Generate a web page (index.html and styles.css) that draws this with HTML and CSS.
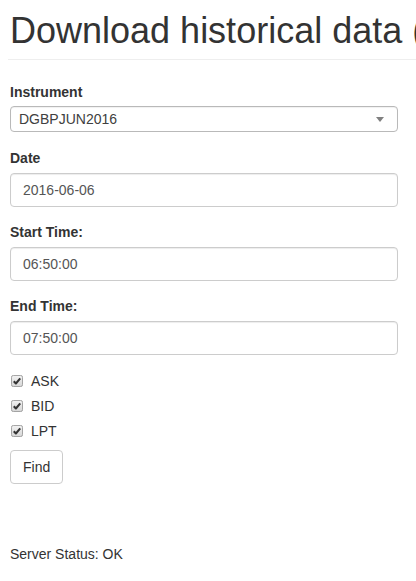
FILE: index.html
```html
<!DOCTYPE html>
<html>
<head>
<meta charset="utf-8">
<link rel="stylesheet" href="styles.css">
</head>
<body>
<div class="page">
  <h1 class="title">Download historical data (</h1>
  <hr class="rule">
  <form class="form">
    <div class="group group-select">
      <label class="lbl lbl-select">Instrument</label>
      <div class="select"><span class="select-text">DGBPJUN2016</span><span class="caret"></span></div>
    </div>
    <div class="group">
      <label class="lbl">Date</label>
      <div class="input">2016-06-06</div>
    </div>
    <div class="group">
      <label class="lbl">Start Time:</label>
      <div class="input">06:50:00</div>
    </div>
    <div class="group">
      <label class="lbl">End Time:</label>
      <div class="input">07:50:00</div>
    </div>
    <div class="checks">
      <div class="check"><svg class="cb" viewBox="0 0 13 13" width="13" height="13"><defs><linearGradient id="g" x1="0" y1="0" x2="0" y2="1"><stop offset="0" stop-color="#f2f2f2"/><stop offset="1" stop-color="#d6d6d6"/></linearGradient></defs><rect x="0.5" y="0.5" width="12" height="12" rx="2" fill="url(#g)" stroke="#9a9a9a"/><path d="M3 6.8 L5.3 9.2 L10 3.6" fill="none" stroke="#333" stroke-width="2.2" stroke-linejoin="round"/></svg><span>ASK</span></div>
      <div class="check"><svg class="cb" viewBox="0 0 13 13" width="13" height="13"><rect x="0.5" y="0.5" width="12" height="12" rx="2" fill="url(#g)" stroke="#9a9a9a"/><path d="M3 6.8 L5.3 9.2 L10 3.6" fill="none" stroke="#333" stroke-width="2.2" stroke-linejoin="round"/></svg><span>BID</span></div>
      <div class="check"><svg class="cb" viewBox="0 0 13 13" width="13" height="13"><rect x="0.5" y="0.5" width="12" height="12" rx="2" fill="url(#g)" stroke="#9a9a9a"/><path d="M3 6.8 L5.3 9.2 L10 3.6" fill="none" stroke="#333" stroke-width="2.2" stroke-linejoin="round"/></svg><span>LPT</span></div>
    </div>
    <button type="button" class="btn">Find</button>
  </form>
  <div class="status">Server Status: OK</div>
</div>
</body>
</html>
```
FILE: styles.css
```css
html, body {
  margin: 0;
  padding: 0;
  background: #fff;
  overflow: hidden;
}
body {
  font-family: "Liberation Sans", Arial, sans-serif;
  font-size: 14px;
  line-height: 20px;
  color: #333;
}
.page {
  width: 416px;
  height: 581px;
  overflow: hidden;
  box-sizing: border-box;
  padding: 0 0 0 10px;
}
.title {
  margin: 11px 0 0 0;
  font-size: 36px;
  font-weight: 400;
  line-height: 40px;
  height: 40px;
  white-space: nowrap;
  color: #333;
}
.rule {
  margin: 8px 0 0 -2px;
  border: 0;
  border-top: 1px solid #eee;
  height: 0;
}
.form {
  margin: 22px 0 0 0;
  width: 388px;
}
.group {
  margin-bottom: 15px;
}
.group-select {
  margin-bottom: 16px;
}
.lbl {
  display: block;
  font-weight: 700;
  margin-bottom: 5px;
  height: 20px;
}
.lbl-select {
  margin-bottom: 4px;
}
.select {
  box-sizing: border-box;
  height: 26px;
  border: 1px solid #b9b9b9;
  border-radius: 4px;
  padding: 0 8px;
  display: flex;
  align-items: center;
  justify-content: space-between;
  color: #404040;
  box-shadow: inset 0 1px 1px rgba(0,0,0,0.06);
}
.select-text {
  line-height: 20px;
}
.caret {
  width: 0;
  height: 0;
  border-style: solid;
  border-width: 5px 4px 0 4px;
  border-color: #808080 transparent transparent transparent;
  margin-right: 5px;
}
.input {
  box-sizing: border-box;
  height: 34px;
  border: 1px solid #ccc;
  border-radius: 4px;
  padding: 6px 12px;
  color: #555;
  box-shadow: inset 0 1px 1px rgba(0,0,0,0.075);
}
.checks {
  margin-top: 16px;
  display: flex;
  flex-direction: column;
  gap: 5px;
}
.check {
  height: 20px;
  display: flex;
  align-items: flex-start;
}
.cb {
  display: block;
  width: 12px;
  height: 12px;
  margin: 4px 8px 0 1px;
}
.btn {
  margin-top: 9px;
  display: block;
  box-sizing: border-box;
  height: 34px;
  padding: 6px 12px;
  font-family: "Liberation Sans", Arial, sans-serif;
  font-size: 14px;
  line-height: 20px;
  color: #333;
  background: #fff;
  border: 1px solid #ccc;
  border-radius: 4px;
}
.status {
  margin-top: 60px;
  color: #333;
}
```
